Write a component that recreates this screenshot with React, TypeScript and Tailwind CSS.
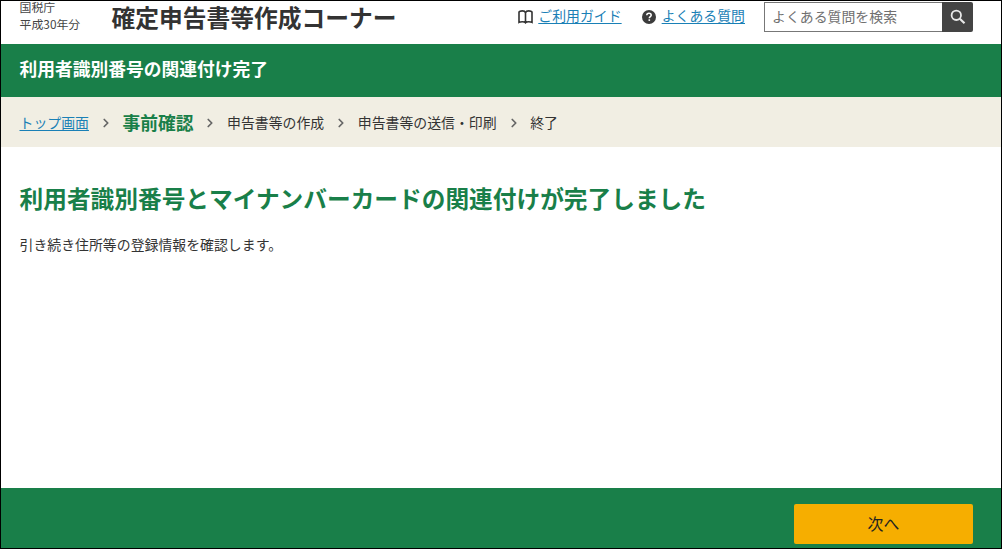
import { ChevronRight } from "lucide-react";

const steps = ["申告書等の作成", "申告書等の送信・印刷", "終了"];

const Separator = () => (
  <ChevronRight className="ml-[10px] mr-[9.5px] mt-px h-[14px] w-[14px] text-[#666]" strokeWidth={3} />
);

const BookIcon = () => (
  <svg className="mt-[3px] h-[14px] w-[15px]" viewBox="0 0 15 14" fill="none" stroke="#333" strokeWidth="1.6">
    <path d="M7.5 12.8V2.8C7 1.2 5.8.9 4.3.9S1.4 1.3 1 2v10.4c1-.5 2-.6 3.3-.6 1.5 0 2.6.2 3.2 1 .6-.8 1.7-1 3.2-1 1.3 0 2.3.1 3.3.6V2c-.4-.7-1.8-1.1-3.3-1.1S8 1.2 7.5 2.8" />
  </svg>
);

const HelpIcon = () => (
  <svg className="h-[14px] w-[14px]" viewBox="0 0 14 14">
    <circle cx="7" cy="7" r="7" fill="#3c3c3c" />
    <path d="M4.8 5.3c0-1.3 1-2 2.2-2s2.2.7 2.2 1.9c0 1.4-1.9 1.4-1.9 3" fill="none" stroke="#fff" strokeWidth="1.5" />
    <rect x="6.5" y="9.3" width="1.6" height="1.6" fill="#fff" />
  </svg>
);

const SearchIcon = () => (
  <svg className="h-[16px] w-[16px]" viewBox="0 0 16 16" fill="none" stroke="#e8e8e8">
    <circle cx="6.3" cy="6.3" r="4.7" strokeWidth="1.8" />
    <path d="M9.8 9.8l4.7 4.5" strokeWidth="2.2" />
  </svg>
);

const Header = () => (
  <header className="flex h-[43px] shrink-0 items-start pl-[18.5px] pr-[28px]">
    <div className="w-[92px] shrink-0 text-[11.9px] text-[#444]">
      <p className="leading-[12px]">国税庁</p>
      <p className="mt-[2px] leading-[18px]">平成30年分</p>
    </div>
    <p className="text-[23.75px] font-bold leading-[31px] text-[#333]">確定申告書等作成コーナー</p>
    <div className="ml-auto flex items-start">
      <div className="flex h-[28px] items-center">
        <BookIcon />
        <a href="#" className="ml-[5px] text-[13.9px] leading-[28px] text-[#1a80b6] underline underline-offset-2">
          ご利用ガイド
        </a>
        <span className="ml-[20px] mr-[6px] mt-[3px]">
          <HelpIcon />
        </span>
        <a href="#" className="text-[13.9px] leading-[28px] text-[#1a80b6] underline underline-offset-2">
          よくある質問
        </a>
      </div>
      <div className="ml-[19px] mt-px flex h-[30px] w-[209px]">
        <input
          type="text"
          placeholder="よくある質問を検索"
          className="min-w-0 flex-1 border border-r-0 border-[#777] bg-white pb-[2px] pl-[7px] text-[13.9px] placeholder:text-[#707070]"
        />
        <button aria-label="検索" className="flex w-[31px] items-center justify-center rounded-r-[2px] bg-[#444]">
          <SearchIcon />
        </button>
      </div>
    </div>
  </header>
);

const Breadcrumb = () => (
  <nav className="flex h-[50px] shrink-0 items-center bg-[#f1eee3] pl-[18.5px] text-[13.9px] leading-[20px]">
    <a href="#" className="text-[#1a80b6] underline underline-offset-2">
      トップ画面
    </a>
    <Separator />
    <span className="text-[17.75px] font-bold text-[#197f49]">事前確認</span>
    {steps.map((step) => (
      <span key={step} className="flex items-center">
        <Separator />
        <span>{step}</span>
      </span>
    ))}
  </nav>
);

const App = () => {
  return (
    <div className="flex h-[549px] w-[1002px] flex-col overflow-hidden border border-black bg-white font-['Noto_Sans_CJK_JP',sans-serif] text-[#333]">
      <Header />
      <div className="flex h-[53px] shrink-0 items-center bg-[#197f49] pb-[5px] pl-[18.5px]">
        <h1 className="text-[17.75px] font-bold leading-[24px] text-white">利用者識別番号の関連付け完了</h1>
      </div>
      <Breadcrumb />
      <main className="flex-1 pl-[18.5px] pt-[33px]">
        <h2 className="text-[23.7px] font-bold leading-[36px] text-[#197f49]">
          利用者識別番号とマイナンバーカードの関連付けが完了しました
        </h2>
        <p className="mt-[18px] text-[13.9px] leading-[20px]">引き続き住所等の登録情報を確認します。</p>
      </main>
      <footer className="flex h-[60px] shrink-0 items-start justify-end bg-[#197f49] pr-[28px] pt-[16px]">
        <button className="h-[40px] w-[179px] rounded-[2px] bg-[#f6ae00] text-[15.9px] text-[#222]">次へ</button>
      </footer>
    </div>
  );
};

export default App;
